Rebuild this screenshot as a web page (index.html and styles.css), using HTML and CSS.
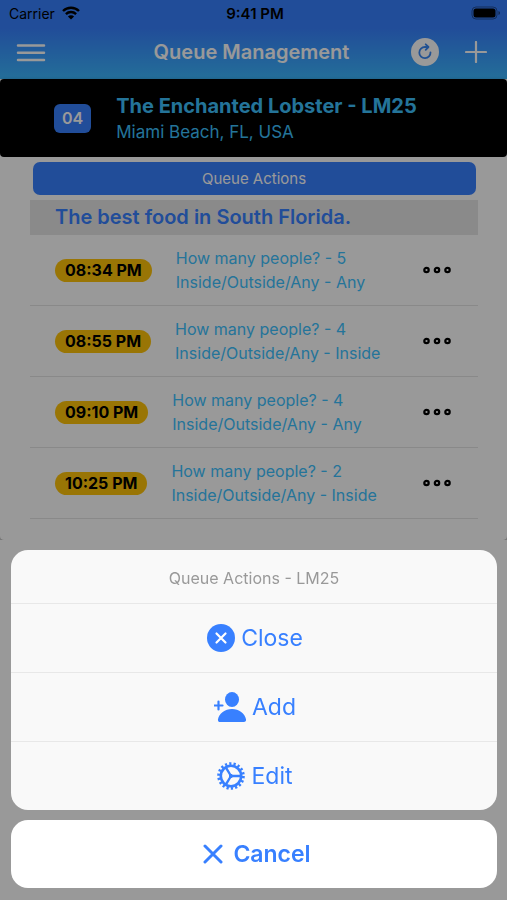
FILE: index.html
```html
<!DOCTYPE html>
<html lang="en">
<head>
<meta charset="utf-8">
<meta name="viewport" content="width=device-width, initial-scale=1">
<title>Queue Management</title>
<link rel="stylesheet" href="styles.css">
</head>
<body>
<svg class="defs" aria-hidden="true">
  <symbol id="dots" viewBox="0 0 28 8">
    <g fill="none" stroke="#000" stroke-width="2.2"><circle cx="3.5" cy="4" r="2.2"/><circle cx="14" cy="4" r="2.2"/><circle cx="24.5" cy="4" r="2.2"/></g>
  </symbol>
</svg>
<header class="header">
  <div class="status">
    <div class="carrier">
      <span>Carrier</span>
      <svg width="18" height="14" viewBox="0 0 18 14" aria-hidden="true"><g fill="none" stroke="#000" stroke-width="2.4"><path d="M1 5a11.5 11.5 0 0 1 16 0"/><path d="M3.9 8.1a7.4 7.4 0 0 1 10.2 0"/></g><path d="M9 13.6L5.9 10.5a4.4 4.4 0 0 1 6.2 0z"/></svg>
    </div>
    <span class="clock">9:41 PM</span>
    <svg class="battery" width="30" height="14" viewBox="0 0 30 14" aria-hidden="true"><rect x="1" y="1" width="25" height="12" rx="4" fill="none" stroke="#000" stroke-opacity=".4"/><rect x="2.5" y="2.5" width="22" height="9" rx="2.5"/><path d="M27.5 5v4q1.5-.6 1.5-2t-1.5-2z" fill-opacity=".5"/></svg>
  </div>
  <div class="toolbar">
    <button class="icon-button" type="button" aria-label="Menu"><svg width="30" height="20" viewBox="0 0 30 20"><path d="M2 3.5h26M2 10.7h26M2 18h26" stroke="#fff" stroke-width="2.5" stroke-linecap="round"/></svg></button>
    <h1>Queue Management</h1>
    <div class="tools">
      <button class="icon-button" type="button" aria-label="Refresh"><svg width="28" height="28" viewBox="0 0 28 28"><circle cx="14" cy="14" r="14" fill="#fff"/><g fill="none" stroke="#3888f4" stroke-width="1.8" stroke-linecap="round" stroke-linejoin="round"><path d="M19.5 14.3A5.6 5.6 0 1 1 14 9h3"/><path d="M14.7 6.3L17.5 9l-2.8 2.8"/></g></svg></button>
      <button class="icon-button" type="button" aria-label="New"><svg width="22" height="22" viewBox="0 0 22 22"><path d="M11 1v20M1 11h20" stroke="#fff" stroke-width="2.2" stroke-linecap="round"/></svg></button>
    </div>
  </div>
</header>
<main class="card">
  <section class="banner">
    <span class="count">04</span>
    <div>
      <h2>The Enchanted Lobster - LM25</h2>
      <p>Miami Beach, FL, USA</p>
    </div>
  </section>
  <div class="content">
    <button class="queue-button" type="button">Queue Actions</button>
    <h3 class="divider">The best food in South Florida.</h3>
    <ul class="list">
      <li><span class="time">08:34 PM</span><p>How many people? - 5<br>Inside/Outside/Any - Any</p><button class="icon-button" type="button" aria-label="Options"><svg width="28" height="8"><use href="#dots"/></svg></button></li>
      <li><span class="time">08:55 PM</span><p>How many people? - 4<br>Inside/Outside/Any - Inside</p><button class="icon-button" type="button" aria-label="Options"><svg width="28" height="8"><use href="#dots"/></svg></button></li>
      <li><span class="time">09:10 PM</span><p>How many people? - 4<br>Inside/Outside/Any - Any</p><button class="icon-button" type="button" aria-label="Options"><svg width="28" height="8"><use href="#dots"/></svg></button></li>
      <li><span class="time">10:25 PM</span><p>How many people? - 2<br>Inside/Outside/Any - Inside</p><button class="icon-button" type="button" aria-label="Options"><svg width="28" height="8"><use href="#dots"/></svg></button></li>
    </ul>
  </div>
</main>
<div class="backdrop">
  <div class="sheet" role="dialog" aria-labelledby="sheet-title">
    <div class="group">
      <h2 id="sheet-title">Queue Actions - LM25</h2>
      <button type="button"><svg width="28" height="28" viewBox="0 0 28 28"><circle cx="14" cy="14" r="14" fill="#3880ff"/><path d="M9.5 9.5l9 9M18.5 9.5l-9 9" stroke="#fff" stroke-width="2.2" stroke-linecap="round"/></svg>Close</button>
      <button type="button"><svg width="32" height="30" viewBox="0 0 32 30" fill="#3880ff"><ellipse cx="18" cy="7.5" rx="7" ry="7.5"/><path d="M18 17c-7 0-13 4.500-14 10.300C3.700 29 4.500 30 6 30h24c1.500 0 2.300-1 2-2.700C31 21.500 25 17 18 17z"/><path d="M4.500 9.500v8M.5 13.500h8" stroke="#3880ff" stroke-width="2.2" stroke-linecap="round"/></svg>Add</button>
      <button type="button"><svg width="28" height="28" viewBox="0 0 28 28" fill="none" stroke="#3880ff"><circle cx="14" cy="14" r="12.4" stroke-width="2.8" stroke-dasharray="2.2 2.128"/><circle cx="14" cy="14" r="10.2" stroke-width="2.6"/><path d="M14 14H24M14 14L8.800 5.400M14 14L8.800 22.600" stroke-width="2.4"/><circle cx="14" cy="14" r="1.6" fill="#3880ff"/></svg>Edit</button>
    </div>
    <button class="cancel" type="button"><svg width="20" height="20" viewBox="0 0 20 20"><path d="M2 2l16 16M18 2L2 18" stroke="#3880ff" stroke-width="3" stroke-linecap="round"/></svg>Cancel</button>
  </div>
</div>
</body>
</html>
```
FILE: styles.css
```css
* { box-sizing: border-box; }
body { margin: 0; background: #fff; color: #000; font-family: Inter, "Liberation Sans", sans-serif; font-size: 16px; }
h1, h2, h3, p, ul { margin: 0; padding: 0; }
button { border: 0; padding: 0; background: none; font: inherit; color: inherit; cursor: pointer; }
svg { display: block; flex: none; }
.defs { position: absolute; width: 0; height: 0; }

.header { background: linear-gradient(#3880ff 35%, #3cb8ff); padding-bottom: 1px; }
.status { display: grid; grid-template-columns: 1fr auto 1fr; align-items: center; height: 26px; padding: 0 6px 0 9px; font-size: 14px; }
.carrier { display: flex; align-items: center; gap: 7px; }
.clock { font-size: 15px; font-weight: 600; }
.battery { justify-self: end; }
.toolbar { display: grid; grid-template-columns: 1fr auto 1fr; align-items: center; height: 52px; padding: 0 20px 0 16px; }
.toolbar h1 { color: #fff; font-size: 20px; font-weight: 600; }
.tools { display: flex; align-items: center; justify-content: flex-end; gap: 26px; }

.card { border-radius: 4px; box-shadow: 0 2px 4px rgba(0, 0, 0, .5); padding-bottom: 21px; }
.banner { display: flex; align-items: center; gap: 25px; height: 78px; padding: 0 54px; border-radius: 4px; background: #000; color: #3dc2ff; }
.banner h2 { font-size: 20px; line-height: 28px; font-weight: 700; }
.banner p { font-size: 17px; line-height: 24px; }
.count { padding: 0 8px; border-radius: 6px; background: #3880ff; color: #fff; font-size: 16px; line-height: 29px; font-weight: 600; }
.content { padding: 5px 29px 0 30px; }
.queue-button { display: block; width: calc(100% - 5px); margin: 0 auto 5px; border-radius: 7px; background: #3880ff; color: #fff; font-size: 15px; line-height: 33px; }
.divider { padding: 0 25px; background: #e6e6e6; color: #3880ff; font-size: 20px; line-height: 35px; font-weight: 600; }
.list { list-style: none; }
.list li { display: flex; align-items: center; gap: 24px; height: 71px; padding: 0 27px 0 25px; border-bottom: 1px solid #e4e4e4; }
.list p { flex: 1; color: #3dc2ff; line-height: 24px; }
.time { padding: 0 10px; border-radius: 12px; background: #ffc409; font-size: 16px; line-height: 23px; font-weight: 700; }

.backdrop { position: fixed; inset: 0; display: flex; align-items: flex-end; padding: 0 10px 12px 11px; background: rgba(0, 0, 0, .4); }
.sheet { flex: 1; display: flex; flex-direction: column; gap: 10px; }
.group { overflow: hidden; border-radius: 17px; background: #f9f9f9; }
.group h2 { padding-top: 3px; color: #999; font-size: 16px; line-height: 50px; font-weight: 400; text-align: center; }
.sheet button { display: flex; align-items: center; justify-content: center; gap: 6px; width: 100%; height: 69px; padding-left: 2px; color: #3880ff; font-size: 23px; }
.group button { border-top: 1px solid #e8e8e8; }
.sheet .cancel { gap: 10px; height: 68px; padding-left: 6px; border-radius: 17px; background: #fff; font-weight: 600; }
```
